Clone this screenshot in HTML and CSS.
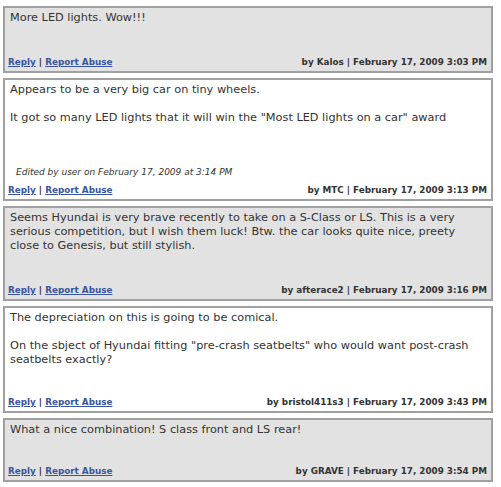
FILE: index.html
```html
<!DOCTYPE html>
<html>
<head>
<meta charset="utf-8">
<link rel="stylesheet" href="styles.css">
</head>
<body>
<div class="list">
  <div class="comment alt">
    <div class="text">More LED lights. Wow!!!</div>
    <div class="spacer"></div>
    <div class="footer"><span class="links"><a href="#">Reply</a> | <a href="#">Report Abuse</a></span><span class="by">by Kalos | February 17, 2009 3:03 PM</span></div>
  </div>
  <div class="comment">
    <div class="text">Appears to be a very big car on tiny wheels.<br><br>It got so many LED lights that it will win the "Most LED lights on a car" award</div>
    <div class="spacer tall"></div>
    <div class="edited">Edited by user on February 17, 2009 at 3:14 PM</div>
    <div class="footer"><span class="links"><a href="#">Reply</a> | <a href="#">Report Abuse</a></span><span class="by">by MTC | February 17, 2009 3:13 PM</span></div>
  </div>
  <div class="comment alt">
    <div class="text">Seems Hyundai is very brave recently to take on a S-Class or LS. This is a very serious competition, but I wish them luck! Btw. the car looks quite nice, preety close to Genesis, but still stylish.</div>
    <div class="spacer"></div>
    <div class="footer"><span class="links"><a href="#">Reply</a> | <a href="#">Report Abuse</a></span><span class="by">by afterace2 | February 17, 2009 3:16 PM</span></div>
  </div>
  <div class="comment">
    <div class="text">The depreciation on this is going to be comical.<br><br>On the sbject of Hyundai fitting "pre-crash seatbelts" who would want post-crash seatbelts exactly?</div>
    <div class="spacer short"></div>
    <div class="footer"><span class="links"><a href="#">Reply</a> | <a href="#">Report Abuse</a></span><span class="by">by bristol411s3 | February 17, 2009 3:43 PM</span></div>
  </div>
  <div class="comment alt">
    <div class="text">What a nice combination! S class front and LS rear!</div>
    <div class="spacer shorter"></div>
    <div class="footer"><span class="links"><a href="#">Reply</a> | <a href="#">Report Abuse</a></span><span class="by">by GRAVE | February 17, 2009 3:54 PM</span></div>
  </div>
</div>
</body>
</html>
```
FILE: styles.css
```css
html, body {
  margin: 0;
  padding: 0;
  background: #ffffff;
}
body {
  font-family: "DejaVu Sans", Verdana, sans-serif;
  color: #333333;
}
.list {
  display: flex;
  flex-direction: column;
  gap: 5px;
  padding: 6px 0 0 3px;
  width: 490px;
}
.comment {
  border: 2px solid #a0a0a0;
  background: #ffffff;
  padding: 3px 4px 2px 5px;
}
.comment.alt {
  background: #e2e2e2;
}
.text {
  font-size: 11.3px;
  line-height: 14px;
}
.spacer {
  height: 30px;
}
.spacer.tall {
  height: 40px;
}
.spacer.short {
  height: 28px;
}
.spacer.shorter {
  height: 27px;
}
.edited {
  font-size: 9px;
  font-style: italic;
  line-height: 14px;
  padding-left: 6px;
  margin-bottom: 4px;
}
.footer {
  display: flex;
  justify-content: space-between;
  font-size: 8.8px;
  font-weight: bold;
  line-height: 14px;
}
.links a {
  color: #3a55a0;
}
.links {
  color: #333333;
  margin-left: -2px;
}
.by {
  color: #333333;
}
```
